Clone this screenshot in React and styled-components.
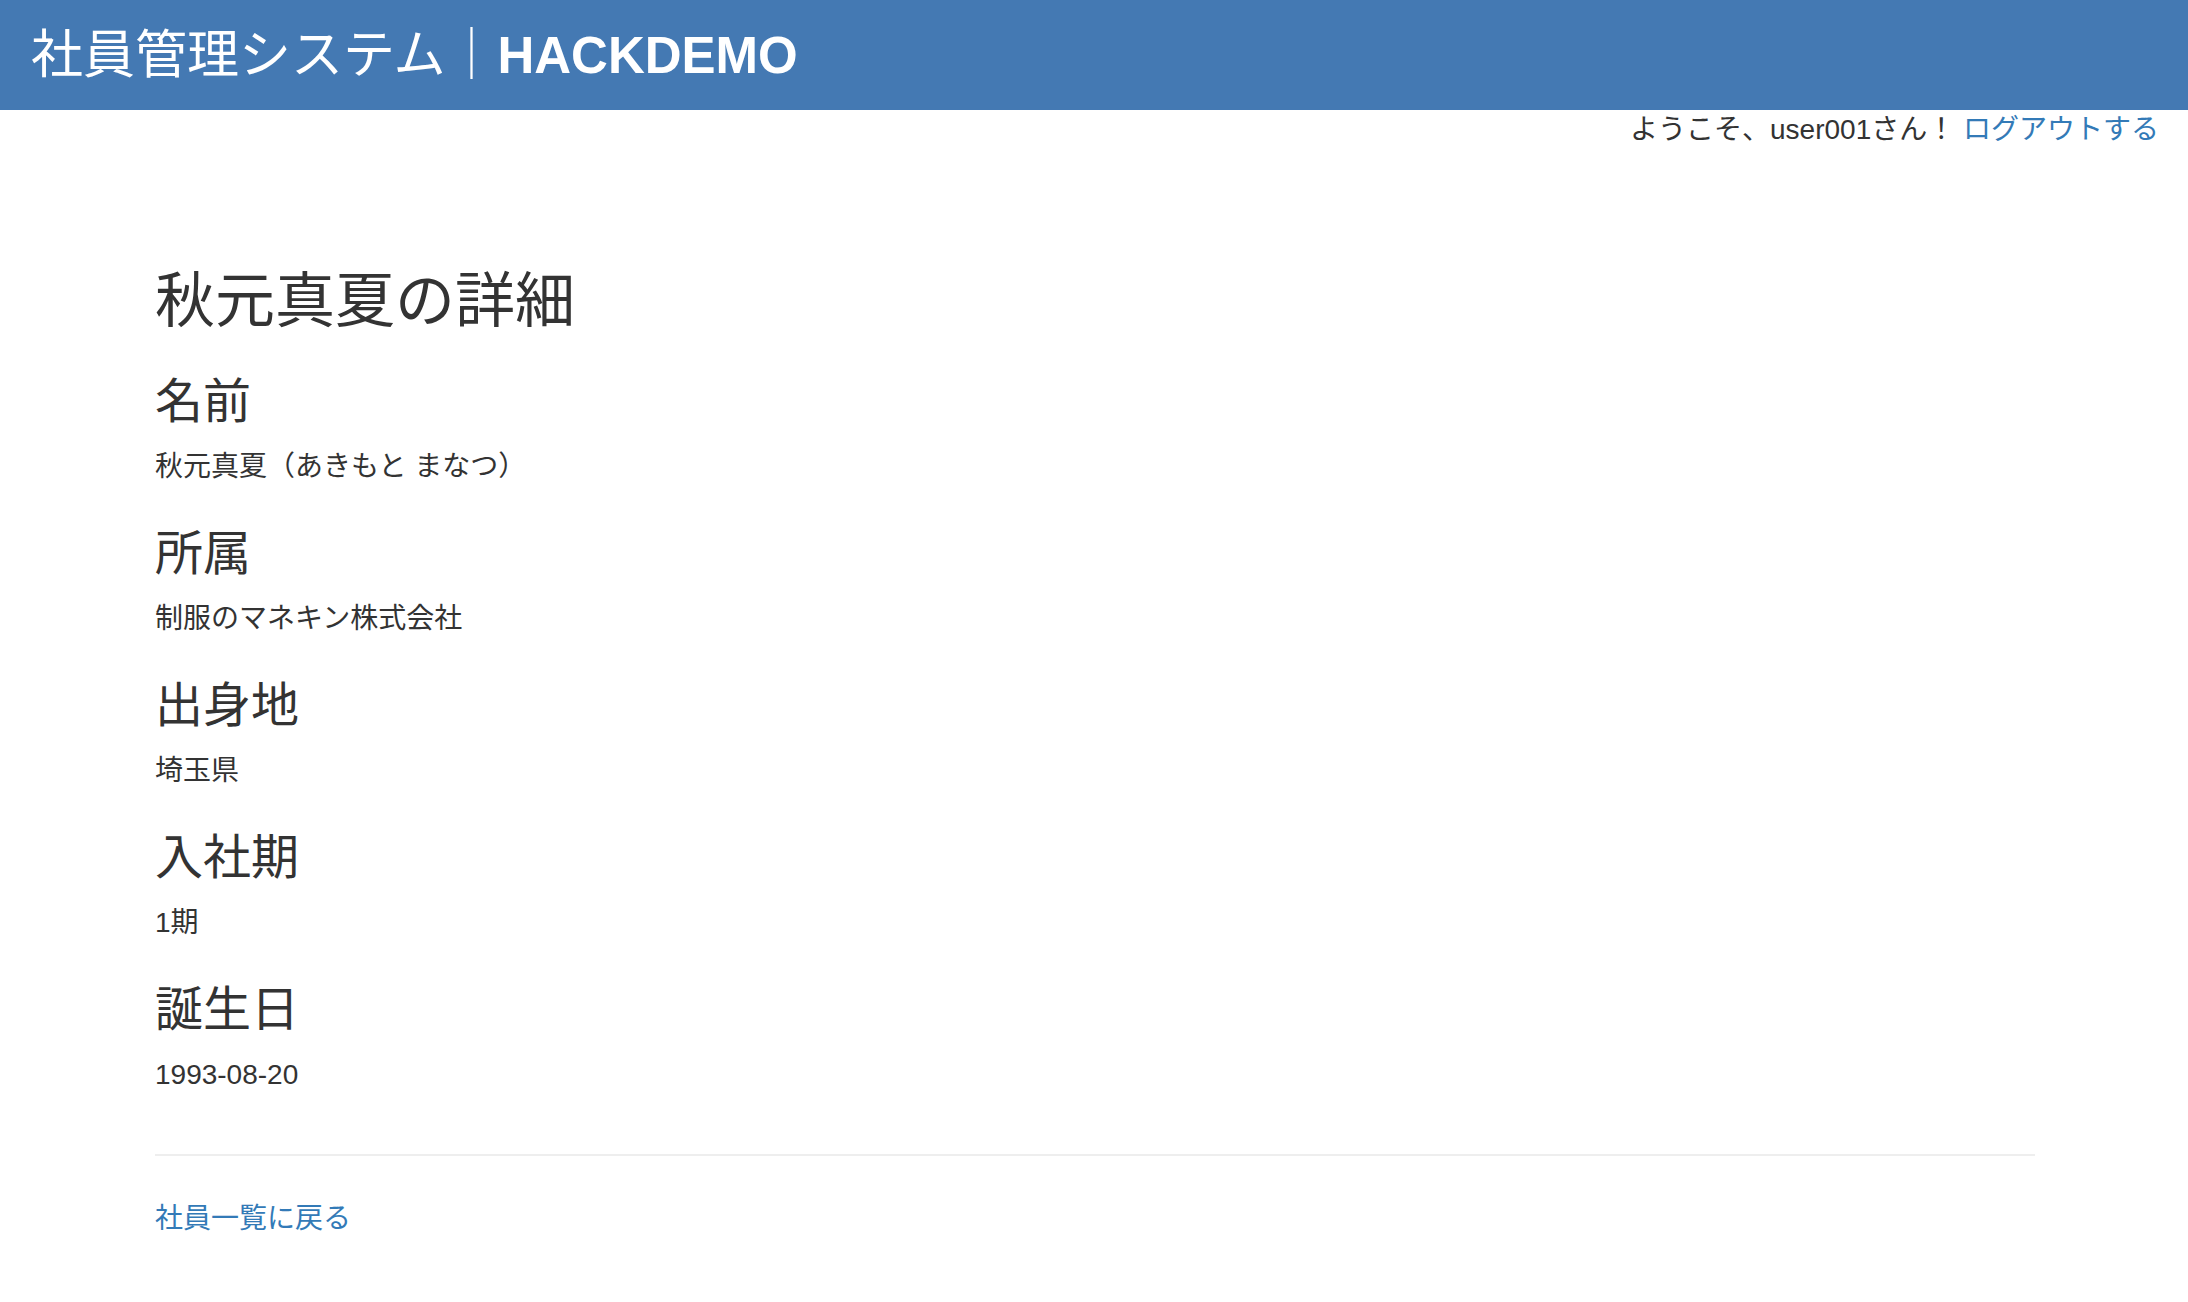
import React from 'react';
import styled, { createGlobalStyle } from 'styled-components';

const GlobalStyle = createGlobalStyle`
  html, body {
    margin: 0;
    padding: 0;
    background: #fff;
  }
  body {
    font-family: "Liberation Sans", "Noto Sans CJK JP", Arial, sans-serif;
    font-size: 28px;
    line-height: 40px;
    color: #333;
  }
`;

const Header = styled.header`
  display: flex;
  align-items: center;
  height: 110px;
  padding-left: 31px;
  background-color: #4479b3;
  color: #fff;
  font-size: 52px;
  line-height: 1;
`;

const Brand = styled.span`
  font-weight: 700;
  font-size: 51px;
`;

const Welcome = styled.p`
  margin: 0;
  padding-right: 29px;
  text-align: right;
  line-height: 40px;
`;

const Link = styled.a`
  color: #337ab7;
  text-decoration: none;
`;

const Container = styled.main`
  max-width: 1880px;
  margin: 0 auto;
  padding-left: 2px;
`;

const Title = styled.h2`
  margin: 119px 0 0;
  font-size: 60px;
  line-height: 66px;
  font-weight: 400;
`;

const Section = styled.section`
  display: flex;
  flex-direction: column;
`;

const Label = styled.h3`
  margin: 41px 0 19px;
  font-size: 48px;
  line-height: 52px;
  font-weight: 400;
`;

const Value = styled.p`
  margin: 0;
  line-height: 40px;
`;

const Divider = styled.hr`
  margin: 59px 0 43px;
  border: 0;
  border-top: 2px solid #eee;
`;

const details = [
  { label: '名前', value: '秋元真夏（あきもと まなつ）' },
  { label: '所属', value: '制服のマネキン株式会社' },
  { label: '出身地', value: '埼玉県' },
  { label: '入社期', value: '1期' },
  { label: '誕生日', value: '1993-08-20' },
];

const App = () => (
  <>
    <GlobalStyle />
    <Header>
      社員管理システム｜<Brand>HACKDEMO</Brand>
    </Header>
    <Welcome>
      ようこそ、user001さん！ <Link href="#">ログアウトする</Link>
    </Welcome>
    <Container>
      <Title>秋元真夏の詳細</Title>
      {details.map((d) => (
        <Section key={d.label}>
          <Label>{d.label}</Label>
          <Value>{d.value}</Value>
        </Section>
      ))}
      <Divider />
      <Link href="#">社員一覧に戻る</Link>
    </Container>
  </>
);

export default App;
